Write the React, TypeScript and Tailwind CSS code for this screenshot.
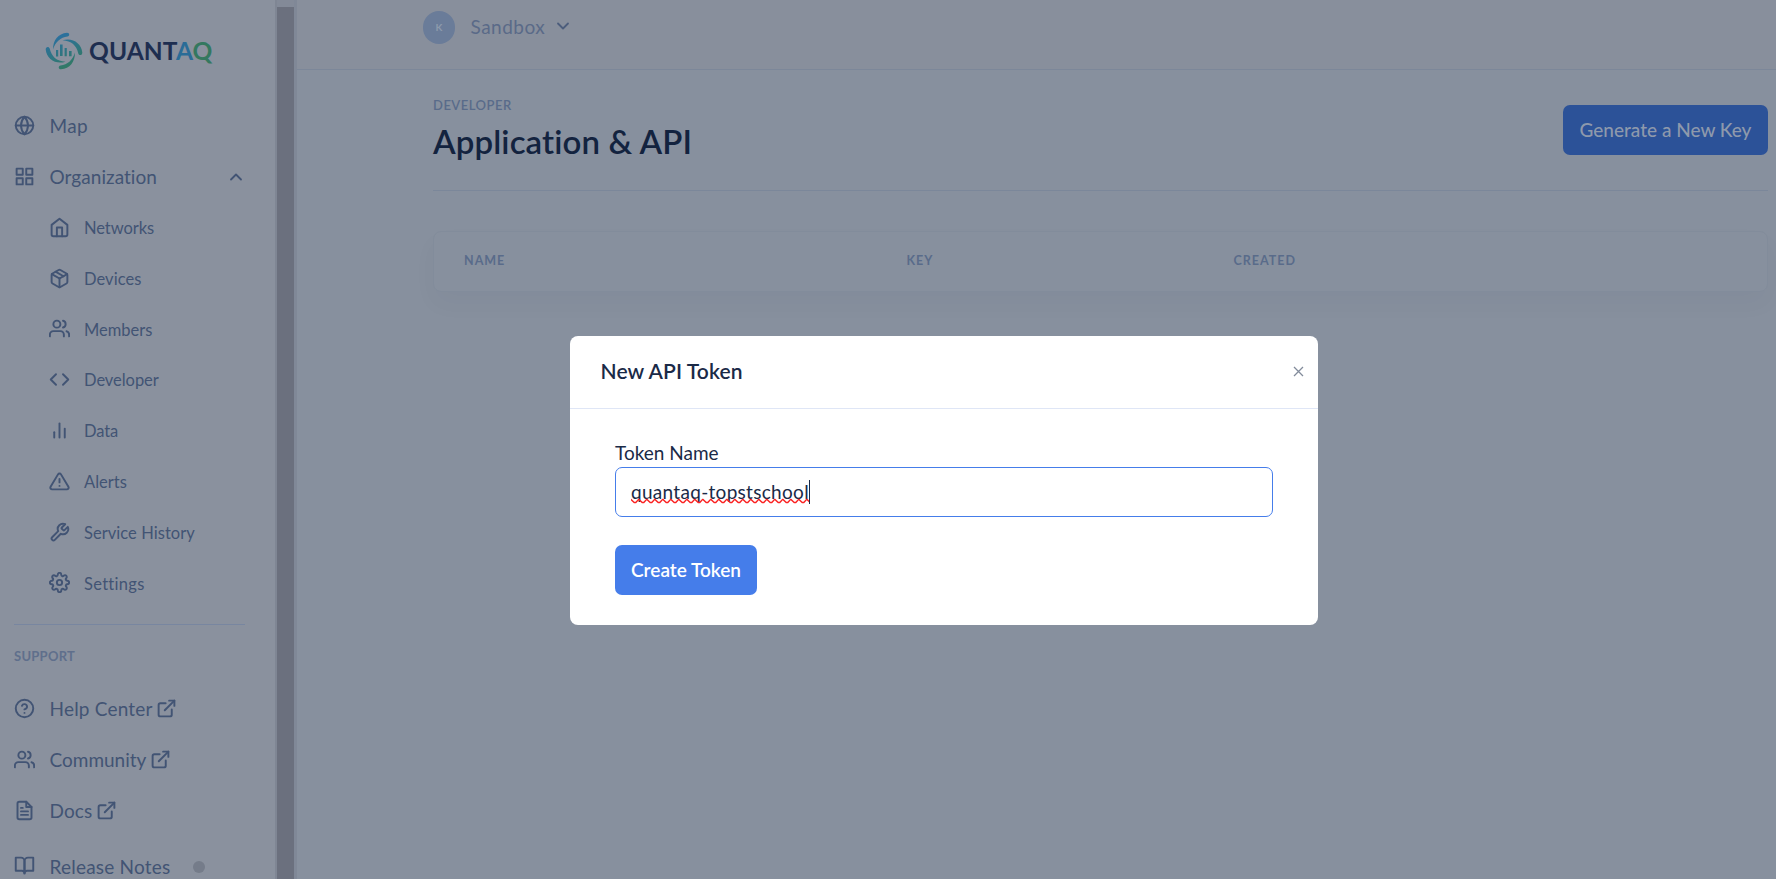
import React from "react";
import {
  FiGlobe, FiGrid, FiChevronUp, FiChevronDown, FiHome, FiPackage, FiUsers, FiCode, FiBarChart2,
  FiAlertTriangle, FiTool, FiSettings, FiHelpCircle, FiExternalLink, FiFileText, FiBookOpen,
} from "react-icons/fi";

const orgItems = [
  { icon: FiHome, label: "Networks", cls: "tracking-[-0.08px]" },
  { icon: FiPackage, label: "Devices", cls: "tracking-[0.05px]" },
  { icon: FiUsers, label: "Members", cls: "tracking-[0px]" },
  { icon: FiCode, label: "Developer", cls: "tracking-[-0.05px]" },
  { icon: FiBarChart2, label: "Data", cls: "tracking-[-0.1px]" },
  { icon: FiAlertTriangle, label: "Alerts", cls: "tracking-[0px]" },
  { icon: FiTool, label: "Service History", cls: "tracking-[0.05px]" },
  { icon: FiSettings, label: "Settings", cls: "tracking-[0.3px]" },
];

const supportItems = [
  { icon: FiHelpCircle, label: "Help Center", cls: "tracking-[0.2px]" },
  { icon: FiUsers, label: "Community", cls: "tracking-[0px]" },
  { icon: FiFileText, label: "Docs", cls: "tracking-[0.1px]" },
];

function Logo() {
  return (
    <div className="flex items-center pl-[45px] pt-[32px]">
      <svg className="h-[38px] w-[38px] shrink-0" viewBox="0 0 38 38" fill="none" strokeLinecap="round">
        <defs>
          <linearGradient id="swirl" gradientUnits="userSpaceOnUse" x1="8" y1="2" x2="24" y2="36">
            <stop offset="0" stopColor="#2a6fa5" />
            <stop offset="0.5" stopColor="#2e7486" />
            <stop offset="1" stopColor="#327a62" />
          </linearGradient>
        </defs>
        <g fill="url(#swirl)">
          <path d="M8 17.500 C8 8 13 1.500 22 0.700 C24.800 0.600 25 4 22.500 4.500 C15.500 5.500 10.500 9.500 8 17.500Z" />
          <path d="M17.500 8.300 C27 5 36.500 11 37.300 20.500 C37.500 23.500 34 24 33.300 21.500 C31.500 13.500 26.500 8.800 17.500 8.300Z" />
          <path d="M30 20.500 C30 30 25 36.500 16 37.300 C13.200 37.400 13 34 15.500 33.500 C22.500 32.500 27.500 28.500 30 20.500Z" />
          <path d="M20.500 29.700 C11 33 1.500 27 0.700 17.500 C0.500 14.500 4 14 4.700 16.500 C6.500 24.500 11.500 29.200 20.500 29.700Z" />
          <path d="M11 18h2.200v6.500H11zM15 12.500h2.600V24H15zM19.600 16h2.200v8.300h-2.200zM24 19h2.600v5.200H24z" />
        </g>
      </svg>
      <div className="ml-[6px] mt-[1px] text-[24.500px] font-bold leading-none tracking-[0.1px] text-[#1e2e50]">
        QUANT<span className="text-[#2a6c97]">A</span><span className="text-[#34785f]">Q</span>
      </div>
    </div>
  );
}

function Sidebar() {
  return (
    <aside className="flex w-[275px] shrink-0 flex-col overflow-hidden bg-[#8a919e] text-[#425474]">
      <Logo />
      <nav className="mt-[31px] flex flex-col">
        <div className="flex h-[51px] items-center pl-[14px] text-[19px]">
          <FiGlobe className="mb-[2px] h-[21px] w-[21px]" strokeWidth={2.2} />
          <span className="ml-[14.500px] tracking-[0.4px]">Map</span>
        </div>
        <div className="flex h-[51px] items-center pl-[14px] text-[19px]">
          <FiGrid className="mb-[2px] h-[21px] w-[21px]" strokeWidth={2.2} />
          <span className="ml-[14.500px] tracking-[0.05px]">Organization</span>
          <FiChevronUp className="mb-[1px] ml-auto mr-[29.500px] h-[20px] w-[20px]" strokeWidth={2.2} />
        </div>
        {orgItems.map(({ icon: Icon, label, cls }) => (
          <div key={label} className="flex h-[50.8px] items-center pl-[49px] text-[16.500px]">
            <Icon className="mb-[2px] h-[21px] w-[21px]" strokeWidth={2.2} />
            <span className={`ml-[14px] ${cls}`}>{label}</span>
          </div>
        ))}
      </nav>
      <div className="ml-[14px] mt-[15px] h-px w-[231px] shrink-0 bg-[#7886a0]" />
      <div className="ml-[14px] mt-[20.500px] text-[13px] font-bold leading-[20px] tracking-[0.25px] text-[#5f6f8c]">SUPPORT</div>
      <div className="mt-[18px] flex flex-col">
        {supportItems.map(({ icon: Icon, label, cls }) => (
          <div key={label} className="flex h-[51px] shrink-0 items-center pl-[14px] text-[19px]">
            <Icon className="mb-[1px] h-[21px] w-[21px]" strokeWidth={2.2} />
            <span className={`ml-[14.500px] ${cls}`}>{label}</span>
            <FiExternalLink className="mb-[1px] ml-[3.500px] h-[21px] w-[21px]" strokeWidth={2.2} />
          </div>
        ))}
        <div className="flex h-[60px] shrink-0 items-center pl-[14px] text-[19px]">
          <FiBookOpen className="mb-[2px] h-[21px] w-[21px]" strokeWidth={2.2} />
          <span className="ml-[14.500px] tracking-[0.2px]">Release Notes</span>
          <span className="ml-[23px] h-3 w-3 rounded-full bg-[#757c8a]" />
        </div>
      </div>
    </aside>
  );
}

function Squiggle() {
  return (
    <svg className="absolute left-0 top-[18px] h-[6px] w-full" aria-hidden="true">
      <defs>
        <pattern id="squiggle" width="8" height="6" patternUnits="userSpaceOnUse">
          <path d="M-1 1.500 L0 1.500 L3.200 4.500 L4.800 4.500 L7.600 1.500 L9 1.500" fill="none" stroke="#fa2222" strokeWidth="1.400" />
        </pattern>
      </defs>
      <rect width="100%" height="6" fill="url(#squiggle)" />
    </svg>
  );
}

function TokenModal() {
  return (
    <div className="absolute left-[570px] top-[336px] flex h-[289px] w-[748px] flex-col rounded-lg bg-white text-[#1a2a47]">
      <div className="flex h-[73px] shrink-0 items-center border-b border-[#dfe6f6] pb-[2px] pl-[30.500px] pr-[14px]">
        <h2 className="text-[21px] font-semibold tracking-[0.1px]">New API Token</h2>
        <svg className="ml-auto h-[11px] w-[11px]" viewBox="0 0 11 11" stroke="#828b9b" strokeWidth="1.300">
          <path d="M1 1l9 9M10 1l-9 9" />
        </svg>
      </div>
      <div className="flex flex-col items-start px-[45px] pt-[29.500px]">
        <label className="mb-[1.500px] text-[19px] leading-[27px]">Token Name</label>
        <div className="flex h-[50px] w-full items-center rounded-[7px] border border-[#457dea] pl-[15px]">
          <span className="relative h-[24px] text-[19px] leading-[24px] tracking-[0.3px]">
            quantaq-topstschool
            <Squiggle />
          </span>
          <span className="h-[24px] w-px bg-[#1a2a47]" />
        </div>
        <button className="mt-[28px] h-[50px] w-[142px] rounded-[7px] bg-[#457dea] text-[19px] font-semibold text-white">Create Token</button>
      </div>
    </div>
  );
}

export default function App() {
  return (
    <div className="relative flex h-[879px] w-[1776px] overflow-hidden bg-[#87909e] font-['Lato',sans-serif] [font-variant-ligatures:none]">
      <Sidebar />
      <div className="flex w-[22px] shrink-0 flex-col border-l-2 border-r-3 border-l-[#7f8694] border-r-[#808897] bg-[#838a98] pt-[7px]">
        <div className="w-full flex-1 bg-[#6b707e]" />
      </div>
      <main className="flex flex-1 flex-col">
        <header className="flex h-[70px] shrink-0 items-start border-b border-[#7c8799] bg-[#888f9c] pl-[126px] pt-[11px]">
          <div className="flex h-[33px] w-[32px] items-center justify-center rounded-full bg-[#6a7c99] text-[10px] font-bold text-[#8d9aac]">K</div>
          <span className="ml-[15.500px] mt-[3.500px] text-[19px] leading-[24px] tracking-[0.5px] text-[#5a6a88]">Sandbox</span>
          <FiChevronDown className="ml-[8px] mt-[5px] h-[20px] w-[20px] text-[#4c5d7c]" strokeWidth={2.2} />
        </header>
        <div className="flex flex-col pl-[136px] pr-[8px]">
          <div className="flex h-[121px] justify-between border-b border-[#7b879a]">
            <div className="pt-[25px]">
              <div className="text-[13px] font-semibold leading-[20px] tracking-[0.5px] text-[#596b8a]">DEVELOPER</div>
              <h1 className="mt-[5px] text-[33px] font-semibold leading-[42px] tracking-[0.12px] text-[#13233f]">Application &amp; API</h1>
            </div>
            <button className="mt-[35px] h-[50px] w-[205px] rounded-[7px] bg-[#2c5298] text-[19px] font-medium text-[#8e99ac]">Generate a New Key</button>
          </div>
          <div className="mt-[40px] flex h-[61px] items-center rounded-lg border border-[#828c9b] pl-[30px] text-[12.500px] font-bold tracking-[1px] text-[#596b8a] shadow-[0_12px_24px_rgba(18,38,63,0.03)]">
            <span className="w-[442.500px]">NAME</span>
            <span className="w-[327px]">KEY</span>
            <span>CREATED</span>
          </div>
        </div>
      </main>
      <TokenModal />
    </div>
  );
}
